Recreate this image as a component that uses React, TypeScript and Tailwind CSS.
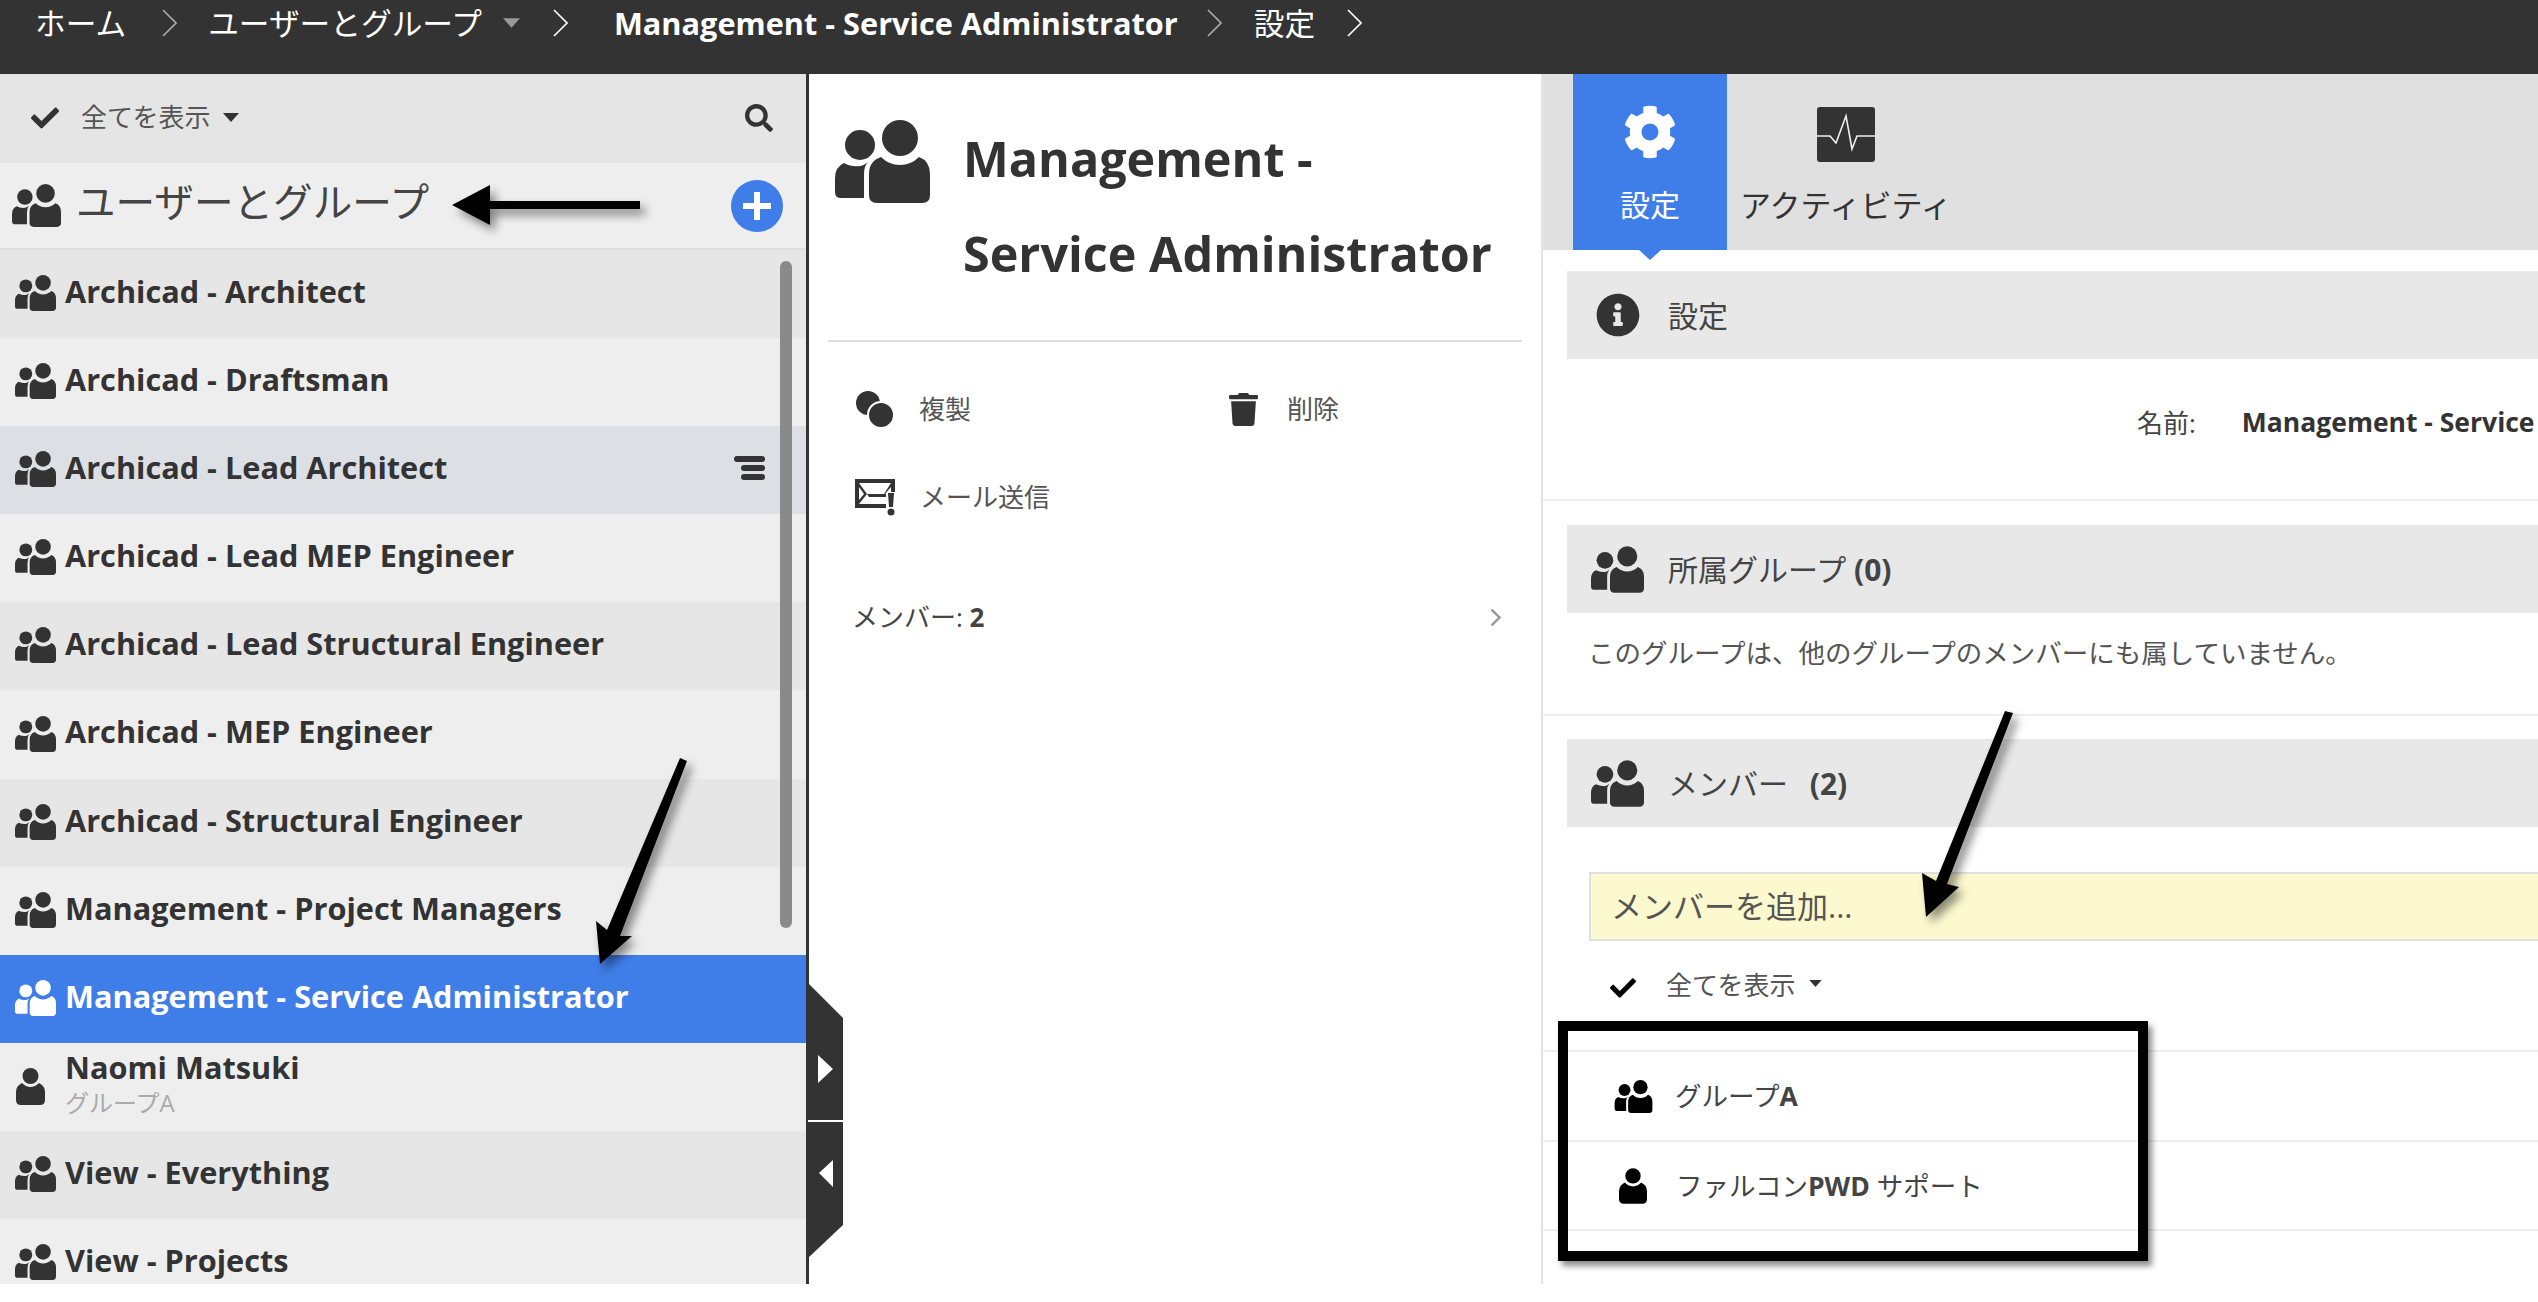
import React from 'react';
import { FaCog, FaSearch, FaTrash, FaCheck, FaInfoCircle } from 'react-icons/fa';

const GroupIcon = ({ className = '' }: { className?: string }) => (
  <svg viewBox="0 0 95 83" className={className} fill="currentColor">
    <ellipse cx="65" cy="18" rx="18" ry="18" />
    <ellipse cx="25" cy="25" rx="15" ry="15" />
    <path d="M34 54Q34 41 46 37Q54 45 65 45Q76 45 84 37Q95 41 95 54V75Q95 83 87 83H42Q34 83 34 75Z" />
    <path d="M0 58Q0 47 9 43Q16 47 25 46Q28 46 33 42Q29 46 29 54V78H6Q0 78 0 72Z" />
  </svg>
);

const PersonIcon = ({ className = '' }: { className?: string }) => (
  <svg viewBox="0 0 29 37" className={className} fill="currentColor">
    <ellipse cx="14.5" cy="8" rx="8" ry="8" />
    <path d="M0 24Q0 18 6 15Q10 19 14.5 19Q19 19 23 15Q29 18 29 24V32Q29 37 24 37H5Q0 37 0 32Z" />
  </svg>
);

const Chevron = ({ className = '' }: { className?: string }) => (
  <svg viewBox="0 0 15 28" className={className} fill="none" stroke="currentColor" strokeWidth="1.6">
    <path d="M1 1L14 14L1 27" />
  </svg>
);

const Caret = ({ className = '' }: { className?: string }) => (
  <svg viewBox="0 0 16 9" className={className} fill="currentColor">
    <path d="M0 0H16L8 9Z" />
  </svg>
);

const rows = [
  { name: 'Archicad - Architect', bg: 'bg-[#e6e6e6]' },
  { name: 'Archicad - Draftsman', bg: 'bg-[#eeeeee]' },
  { name: 'Archicad - Lead Architect', bg: 'bg-[#dce0e4]', menu: true },
  { name: 'Archicad - Lead MEP Engineer', bg: 'bg-[#eeeeee]' },
  { name: 'Archicad - Lead Structural Engineer', bg: 'bg-[#e6e6e6]' },
  { name: 'Archicad - MEP Engineer', bg: 'bg-[#eeeeee]' },
  { name: 'Archicad - Structural Engineer', bg: 'bg-[#e6e6e6]' },
  { name: 'Management - Project Managers', bg: 'bg-[#eeeeee]' },
  { name: 'Management - Service Administrator', bg: 'bg-[#3f7de8]', active: true },
];

const SectionHead = ({ icon, children }: { icon: React.ReactNode; children: React.ReactNode }) => (
  <div className="ml-[24px] flex h-[88px] items-center bg-[#e8e8e8] text-[30px] text-[#444]">
    <div className="flex w-[101px] shrink-0 justify-center text-[#333]">{icon}</div>
    {children}
  </div>
);

export default function App() {
  return (
    <div className="relative h-[1302px] w-[2538px] overflow-hidden bg-white [font-family:'Open_Sans','Noto_Sans_CJK_JP',sans-serif]">
      {/* breadcrumb */}
      <header className="flex h-[74px] bg-[#333333] pl-[35px] text-[30.7px] leading-[47px] text-white">
        <span>ホーム</span>
        <Chevron className="ml-[36px] mt-[9px] h-[28px] w-[15px] text-[#aaa]" />
        <span className="ml-[31px]">ユーザーとグループ</span>
        <Caret className="ml-[21px] mt-[18px] h-[10px] w-[17px] text-[#999]" />
        <Chevron className="ml-[33px] mt-[9px] h-[28px] w-[15px] text-white" />
        <span className="ml-[46px] font-bold">Management - Service Administrator</span>
        <Chevron className="ml-[29px] mt-[9px] h-[28px] w-[15px] text-[#aaa]" />
        <span className="ml-[32px]">設定</span>
        <Chevron className="ml-[32px] mt-[9px] h-[28px] w-[15px] text-white" />
      </header>

      <div className="flex h-[1210px]">
        {/* left list */}
        <aside className="relative w-[809px] shrink-0 overflow-hidden border-r-[3px] border-[#333]">
          <div className="flex h-[89px] items-center bg-[#e5e5e5] pb-[2px] text-[26px] text-[#555]">
            <FaCheck className="ml-[31px] text-[#333]" size={28} />
            <span className="ml-[22px]">全てを表示</span>
            <Caret className="ml-[13px] h-[9px] w-[16px] text-[#333]" />
            <FaSearch className="ml-auto mr-[33px] text-[#333]" size={28} />
          </div>
          <div className="flex h-[87px] items-center border-b-2 border-[#dedede] bg-[#eeeeee]">
            <GroupIcon className="ml-[12px] h-[43px] w-[49px] text-[#333]" />
            <span className="mb-[5px] ml-[15px] text-[39.6px] text-[#444]">ユーザーとグループ</span>
            <div className="relative ml-auto mr-[23px] h-[52px] w-[52px] rounded-full bg-[#3f7de8]">
              <div className="absolute left-[12px] top-[23px] h-[6px] w-[28px] bg-white" />
              <div className="absolute left-[23px] top-[12px] h-[28px] w-[6px] bg-white" />
            </div>
          </div>
          {rows.map((r) => (
            <div key={r.name} className={`flex h-[88.1px] items-center ${r.bg} ${r.active ? 'text-white' : 'text-[#333]'}`}>
              <GroupIcon className="mb-[2px] ml-[15px] h-[36px] w-[41px]" />
              <span className="mb-[6px] ml-[9px] text-[30.7px] font-bold">{r.name}</span>
              {r.menu && (
                <div className="mb-[4px] ml-auto mr-[41px] flex w-[31px] flex-col items-end gap-[3px]">
                  <div className="h-[6px] w-[31px] rounded-full bg-[#333]" />
                  <div className="h-[6px] w-[24px] rounded-full bg-[#333]" />
                  <div className="h-[6px] w-[24px] rounded-full bg-[#333]" />
                </div>
              )}
            </div>
          ))}
          <div className="flex h-[88px] items-center bg-[#eeeeee] text-[#333]">
            <PersonIcon className="ml-[16px] h-[37px] w-[29px]" />
            <div className="mb-[8px] ml-[20px]">
              <div className="text-[30.7px] font-bold leading-[40px]">Naomi Matsuki</div>
              <div className="text-[24px] leading-[32px] text-[#aaa]">グループA</div>
            </div>
          </div>
          <div className="flex h-[88px] items-center bg-[#e6e6e6] text-[#333]">
            <GroupIcon className="mb-[2px] ml-[15px] h-[36px] w-[41px]" />
            <span className="mb-[6px] ml-[9px] text-[30.7px] font-bold">View - Everything</span>
          </div>
          <div className="flex h-[88px] items-center bg-[#eeeeee] text-[#333]">
            <GroupIcon className="mb-[2px] ml-[15px] h-[36px] w-[41px]" />
            <span className="mb-[6px] ml-[9px] text-[30.7px] font-bold">View - Projects</span>
          </div>
          <div className="absolute right-[14px] top-[187px] h-[667px] w-[12px] rounded-full bg-[#8a8a8a]" />
        </aside>

        {/* middle detail */}
        <section className="w-[732px] shrink-0 text-[#333]">
          <div className="mx-[19px] flex h-[268px] border-b-2 border-[#dddddd]">
            <GroupIcon className="ml-[7px] mt-[46px] h-[83px] w-[95px] shrink-0" />
            <h1 className="ml-[33px] mt-[37px] text-[48.5px] font-bold leading-[95px]">
              Management -<br />Service Administrator
            </h1>
          </div>
          <div className="grid grid-cols-[372px_1fr] pl-[46px] pt-[23px] text-[26px] text-[#555]">
            <div className="flex h-[88px] items-center">
              <svg viewBox="0 0 39 37" className="h-[37px] w-[39px] text-[#333]" fill="currentColor">
                <circle cx="13" cy="12" r="12" />
                <circle cx="26" cy="24" r="13" stroke="#fff" strokeWidth="2" />
              </svg>
              <span className="ml-[25px]">複製</span>
            </div>
            <div className="flex h-[88px] items-center">
              <FaTrash className="text-[#333]" size={33} />
              <span className="ml-[27px]">削除</span>
            </div>
            <div className="flex h-[88px] items-center">
              <svg viewBox="0 0 40 37" className="h-[37px] w-[40px] text-[#333]" fill="currentColor">
                <path d="M0 0H40V13H36V4H4V25H31V29H0Z" />
                <path d="M4 4L12 15L4 25V21L9 15L4 8ZM36 4L29 15H12L14 18H31V15H30L36 8Z" />
                <path d="M33 14H39L38 28H34Z" />
                <circle cx="36" cy="33" r="3.5" />
              </svg>
              <span className="ml-[25px]">メール送信</span>
            </div>
          </div>
          <div className="mt-[57px] flex items-center pl-[43px] pr-[40px] text-[26px] text-[#444]">
            <span>メンバー: <span className="font-bold">2</span></span>
            <Chevron className="ml-auto h-[17px] w-[11px] text-[#999] [stroke-width:4]" />
          </div>
        </section>

        {/* right detail */}
        <section className="min-w-0 flex-1 border-l-2 border-[#e4e4e4] text-[#444]">
          <div className="flex h-[176px] bg-[#e0e0e0] pl-[30px]">
            <div className="relative flex w-[154px] flex-col items-center bg-[#3f7de8] text-white">
              <FaCog className="mt-[31px]" size={54} />
              <span className="mt-[23px] text-[30px]">設定</span>
              <div className="absolute top-[176px] h-0 w-0 border-x-[11px] border-t-[10px] border-x-transparent border-t-[#3f7de8]" />
            </div>
            <div className="ml-[13px] flex flex-col items-center text-[#333]">
              <svg viewBox="0 0 58 55" className="mt-[33px] h-[55px] w-[58px]">
                <rect width="58" height="55" rx="3" fill="#333" />
                <path d="M0 29H13L19 36L29 9L35 42L40 29H58" fill="none" stroke="#eee" strokeWidth="1.6" />
              </svg>
              <span className="mt-[20px] text-[31px]">アクティビティ</span>
            </div>
          </div>
          <div className="pt-[21px]">
            <SectionHead icon={<FaInfoCircle size={44} />}>
              <span>設定</span>
            </SectionHead>
            <div className="flex h-[142px] items-center border-b-2 border-[#eeeeee] pb-[12px] text-[26px]">
              <span className="ml-[594px] shrink-0 whitespace-nowrap">名前:</span>
              <span className="ml-[46px] whitespace-nowrap text-[26.5px] font-bold text-[#333]">Management - Service</span>
            </div>
            <div className="pt-[24px]">
              <SectionHead icon={<GroupIcon className="h-[47px] w-[53px]" />}>
                <span>所属グループ <span className="font-bold">(0)</span></span>
              </SectionHead>
              <div className="flex h-[103px] items-center border-b-2 border-[#eeeeee] pb-[19px] pl-[45px] text-[26.5px] text-[#555]">
                このグループは、他のグループのメンバーにも属していません。
              </div>
            </div>
            <div className="pt-[23px]">
              <SectionHead icon={<GroupIcon className="h-[47px] w-[53px]" />}>
                <span>メンバー <span className="ml-[14px] font-bold">(2)</span></span>
              </SectionHead>
              <div className="ml-[46px] mt-[45px] flex h-[69px] items-center border-2 border-r-0 border-[#e0e0e0] bg-[#fdf9cf] pl-[20px] text-[31px] text-[#555]">
                メンバーを追加...
              </div>
              <div className="flex h-[111px] items-start border-b-2 border-[#eeeeee] pl-[67px] pt-[25px] text-[26px] text-[#555]">
                <FaCheck className="mt-[9px] text-black" size={26} />
                <span className="ml-[30px]">全てを表示</span>
                <Caret className="ml-[14px] mt-[14px] h-[7px] w-[13px] text-[#333]" />
              </div>
              <div className="flex h-[90px] items-center border-b-2 border-[#eeeeee] text-[26.5px] text-[#444]">
                <GroupIcon className="ml-[70px] h-[33px] w-[41px] text-black" />
                <span className="ml-[21px] mt-[2px]">グループ<span className="font-bold">A</span></span>
              </div>
              <div className="flex h-[89px] items-center border-b-2 border-[#eeeeee] text-[26.5px] text-[#444]">
                <PersonIcon className="ml-[76px] h-[36px] w-[28px] text-black" />
                <span className="ml-[29px] mt-[2px]">ファルコン<span className="font-bold">PWD</span> サポート</span>
              </div>
            </div>
          </div>
        </section>
      </div>

      {/* collapse handle */}
      <svg viewBox="0 0 35 275" className="absolute left-[808px] top-[983px] h-[275px] w-[35px]">
        <path d="M0 0L35 35V242L0 275Z" fill="#333" />
        <path d="M0 138H35" stroke="#fff" strokeWidth="2" />
        <path d="M10 72L25 86L10 100Z" fill="#fff" />
        <path d="M25 177L11 190L25 204Z" fill="#fff" />
      </svg>

      {/* annotations on top of the screenshot */}
      <svg viewBox="0 0 2538 1302" className="absolute inset-0 h-[1302px] w-[2538px] drop-shadow-[5px_6px_5px_rgba(0,0,0,0.45)]">
        <path d="M640 201V209H490V225L452 205L490 185V201Z" />
        <path d="M680 758L687 761L620 936L632 936L600 964L596 921L607 930Z" />
        <path d="M2005 711L2013 713L1947 884L1959 887L1926 917L1922 873L1936 881Z" />
      </svg>
      <div className="absolute left-[1558px] top-[1021px] h-[240px] w-[590px] border-[10px] border-black shadow-[4px_5px_6px_rgba(0,0,0,0.45)]" />
      <div className="absolute bottom-0 left-0 h-[18px] w-[2538px] bg-white" />
    </div>
  );
}
